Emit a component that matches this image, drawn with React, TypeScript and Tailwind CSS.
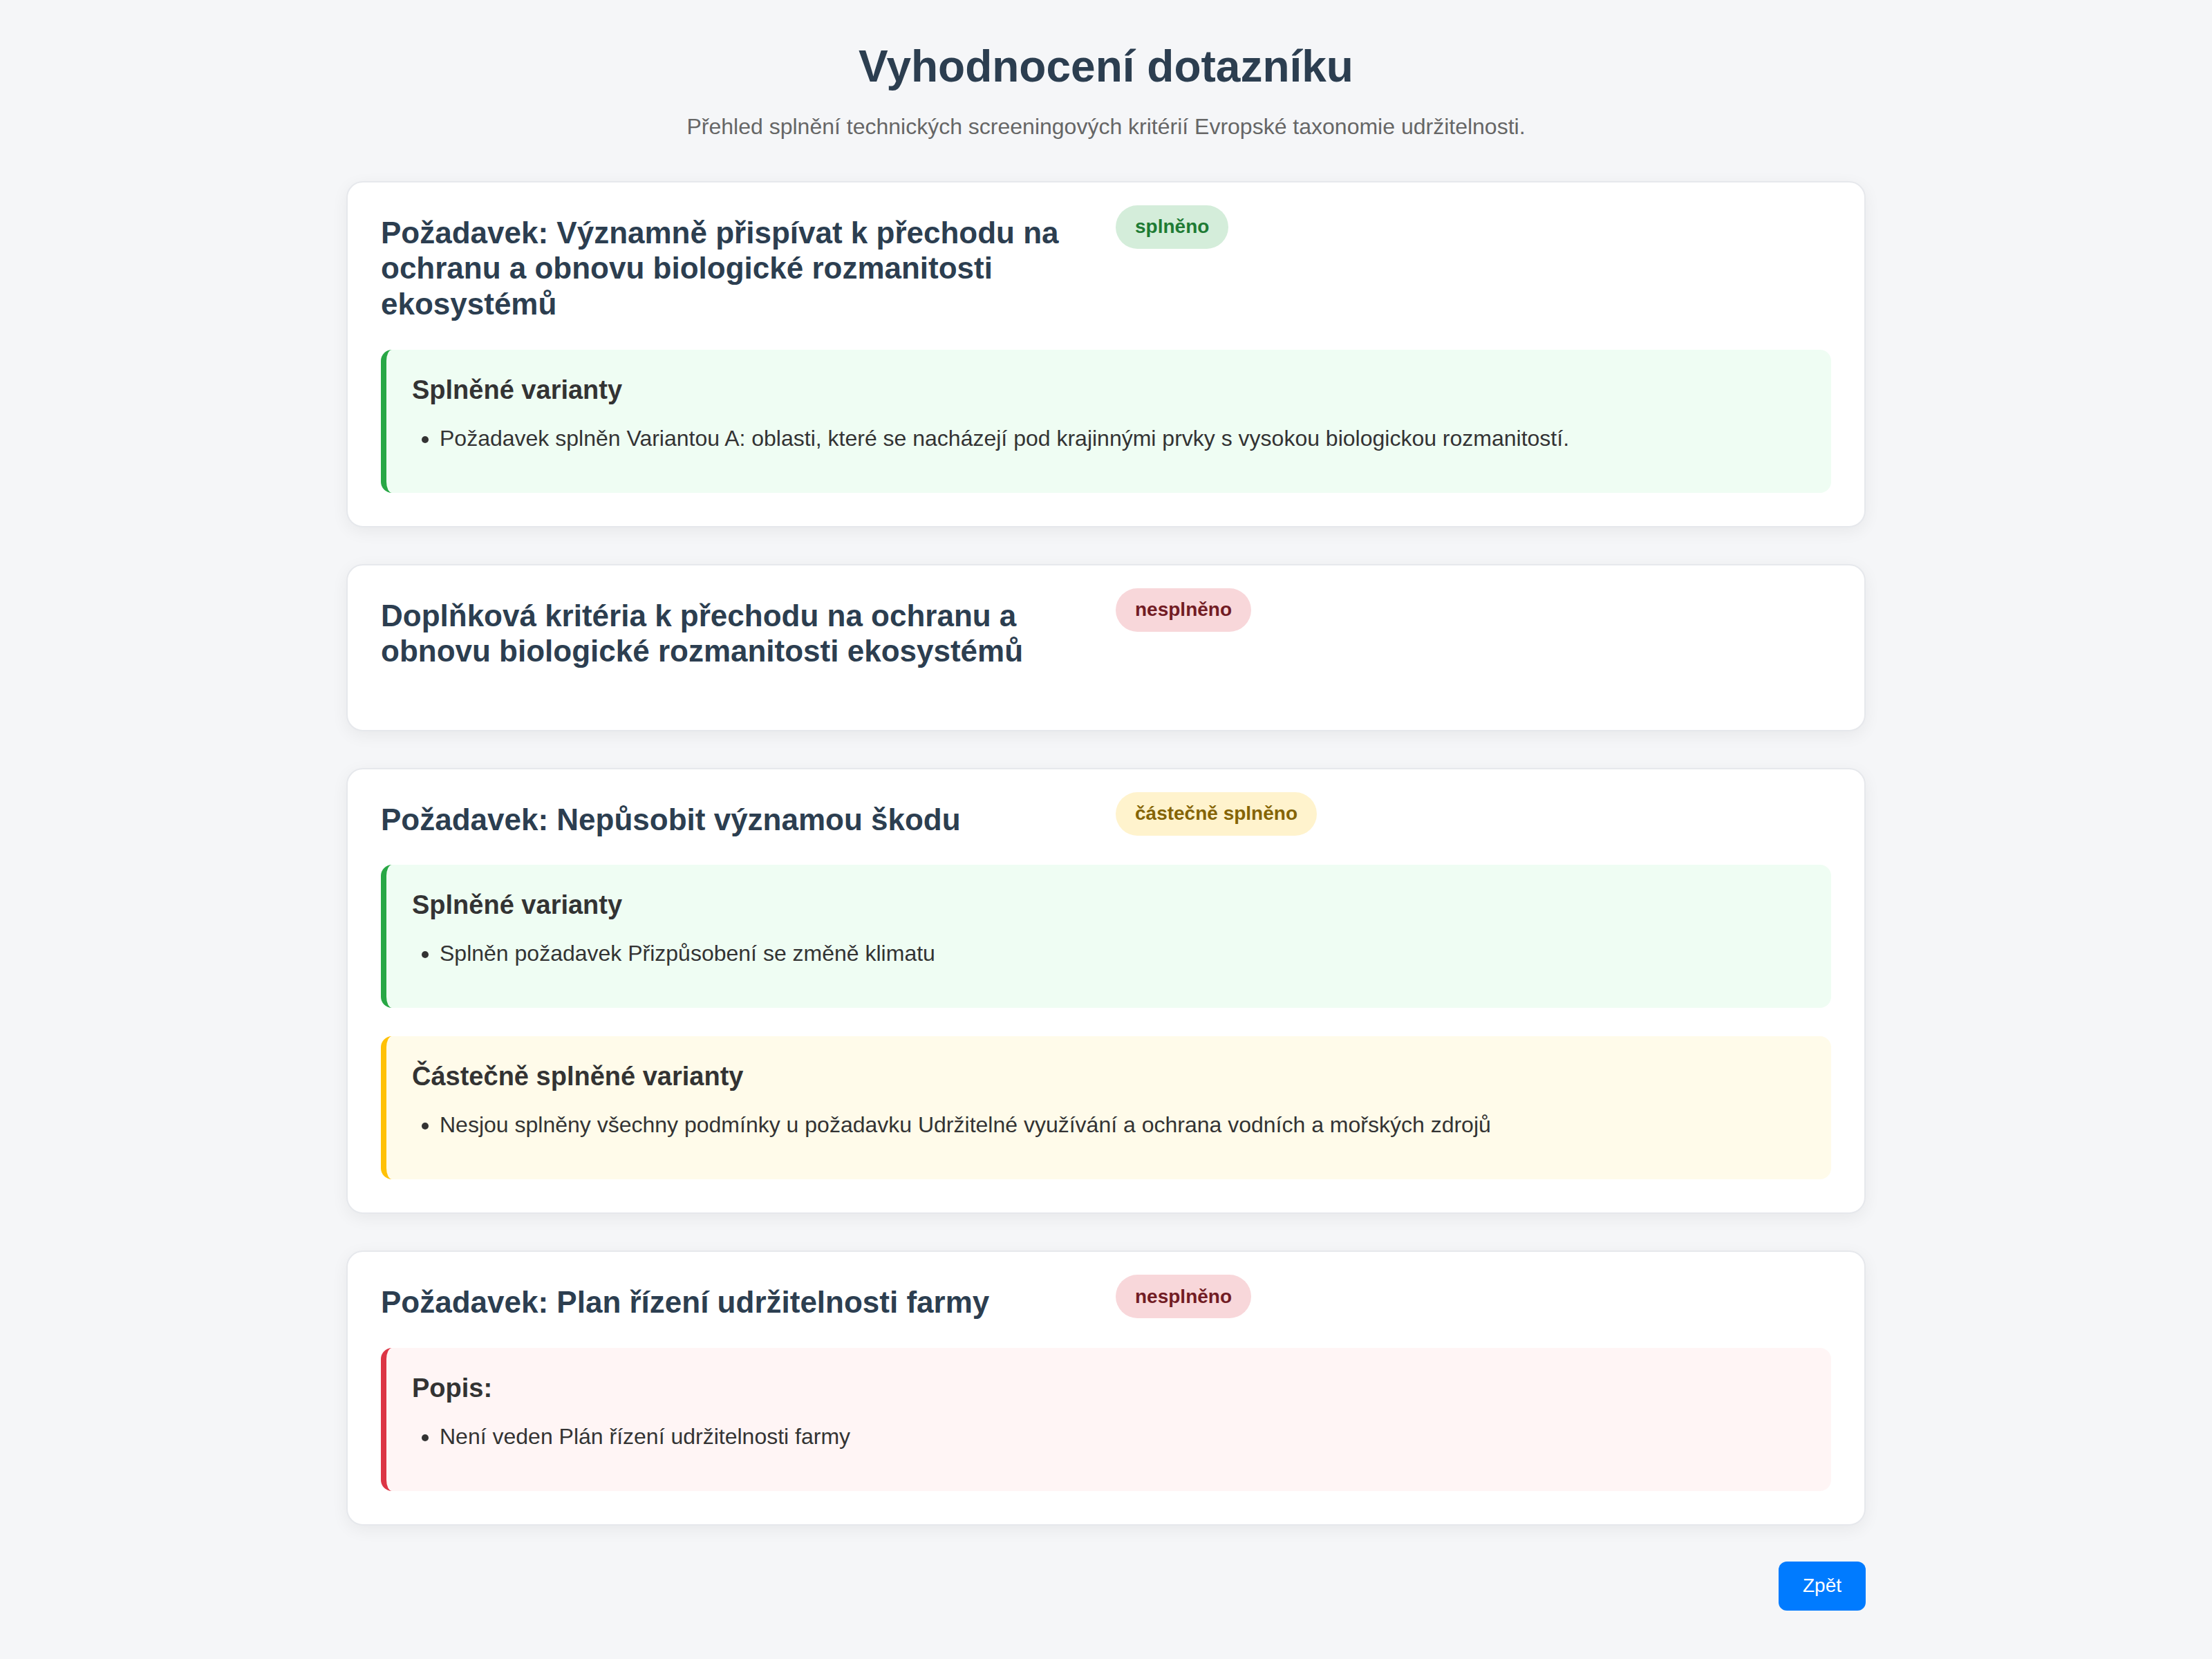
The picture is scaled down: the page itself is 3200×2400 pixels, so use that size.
import React from "react";

type Status = "ok" | "fail" | "partial";
type Tone = "green" | "yellow" | "red";

interface Section {
  tone: Tone;
  heading: string;
  items: string[];
}

interface Card {
  title: string;
  status: Status;
  sections: Section[];
}

const cards: Card[] = [
  {
    title:
      "Požadavek: Významně přispívat k přechodu na ochranu a obnovu biologické rozmanitosti ekosystémů",
    status: "ok",
    sections: [
      {
        tone: "green",
        heading: "Splněné varianty",
        items: [
          "Požadavek splněn Variantou A: oblasti, které se nacházejí pod krajinnými prvky s vysokou biologickou rozmanitostí.",
        ],
      },
    ],
  },
  {
    title:
      "Doplňková kritéria k přechodu na ochranu a obnovu biologické rozmanitosti ekosystémů",
    status: "fail",
    sections: [],
  },
  {
    title: "Požadavek: Nepůsobit významou škodu",
    status: "partial",
    sections: [
      {
        tone: "green",
        heading: "Splněné varianty",
        items: ["Splněn požadavek Přizpůsobení se změně klimatu"],
      },
      {
        tone: "yellow",
        heading: "Částečně splněné varianty",
        items: [
          "Nesjou splněny všechny podmínky u požadavku Udržitelné využívání a ochrana vodních a mořských zdrojů",
        ],
      },
    ],
  },
  {
    title: "Požadavek: Plan řízení udržitelnosti farmy",
    status: "fail",
    sections: [
      {
        tone: "red",
        heading: "Popis:",
        items: ["Není veden Plán řízení udržitelnosti farmy"],
      },
    ],
  },
];

function Badge({ status }: { status: Status }) {
  if (status === "ok")
    return (
      <span className="mt-[1px] flex h-[63px] shrink-0 items-center rounded-full bg-[#d4edda] px-[28px] text-[28px] font-bold text-[#1e7b34]">
        splněno
      </span>
    );
  if (status === "fail")
    return (
      <span className="mt-[1px] flex h-[63px] shrink-0 items-center rounded-full bg-[#f8d7da] px-[28px] text-[28px] font-bold text-[#721c24]">
        nesplněno
      </span>
    );
  return (
    <span className="mt-[1px] flex h-[63px] shrink-0 items-center rounded-full bg-[#fff3cd] px-[28px] text-[28px] font-bold text-[#856404]">
      částečně splněno
    </span>
  );
}

function Box({ section }: { section: Section }) {
  const toneCls =
    section.tone === "green"
      ? "bg-[#effdf3] border-[#28a745]"
      : section.tone === "yellow"
      ? "bg-[#fffbea] border-[#ffc107]"
      : "bg-[#fff5f5] border-[#dc3545]";
  return (
    <div
      className={`rounded-[16px] border-l-[8px] pl-[37px] pr-[36px] pt-[34px] pb-[31px] ${toneCls}`}
    >
      <h3 className="text-[38px] font-bold leading-[48px] text-[#333333]">
        {section.heading}
      </h3>
      <ul className="mt-[22px] mb-[24px] list-disc pl-[40px] text-[32px] leading-[48px] text-[#333333]">
        {section.items.map((it) => (
          <li key={it}>{it}</li>
        ))}
      </ul>
    </div>
  );
}

export default function App() {
  return (
    <div className="min-h-screen bg-[#f5f6f8] pt-[58px] pb-[60px] font-['Liberation_Sans',Arial,sans-serif]">
      <div className="mx-auto w-[2198px]">
        <h1 className="text-center text-[64px] font-bold leading-[76.8px] text-[#2c3e50]">
          Vyhodnocení dotazníku
        </h1>
        <p className="mt-[24px] text-center text-[32px] leading-[48px] text-[#666666]">
          Přehled splnění technických screeningových kritérií Evropské taxonomie
          udržitelnosti.
        </p>

        <div className="mt-[55px] flex flex-col gap-[53px]">
          {cards.map((c) => (
            <div
              key={c.title}
              className="rounded-[24px] border-2 border-[#e6e8ec] bg-white px-[48px] pt-[32px] pb-[48px] shadow-[0_6px_24px_rgba(0,0,0,0.06)]"
            >
              <div className="mb-[40px] flex items-start gap-[32px]">
                <h2 className="mt-[15px] w-[1031px] shrink-0 text-[44px] font-bold leading-[51.6px] text-[#2c3e50]">
                  {c.title}
                </h2>
                <Badge status={c.status} />
              </div>
              {c.sections.length > 0 && (
                <div className="flex flex-col gap-[41px]">
                  {c.sections.map((s) => (
                    <Box key={s.heading} section={s} />
                  ))}
                </div>
              )}
            </div>
          ))}
        </div>

        <div className="mt-[52px] flex justify-end">
          <button className="flex h-[71px] items-center rounded-[12px] bg-[#007bff] px-[35px] text-[28px] text-white">
            Zpět
          </button>
        </div>
      </div>
    </div>
  );
}
